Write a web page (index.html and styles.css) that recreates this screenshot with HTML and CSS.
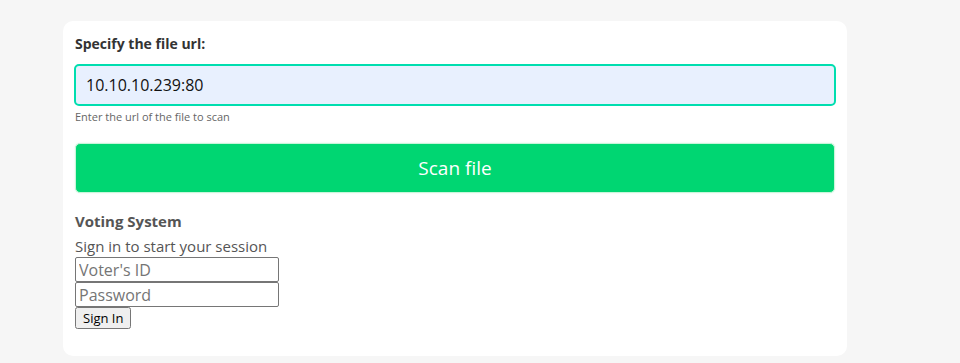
FILE: index.html
```html
<!DOCTYPE html>
<html>
<head>
  <title>Scan File</title>
  <link rel="stylesheet" href="styles.css">
</head>
<body>
  <div class="card">
    <form class="scan-form">
      <label class="field-label" for="file-url">Specify the file url:</label>
      <input class="url-input" type="text" id="file-url" value="10.10.10.239:80">
      <small class="help-text">Enter the url of the file to scan</small>
      <button class="scan-button" type="button">Scan file</button>
    </form>

    <div class="voting">
      <h3 class="voting-title">Voting System</h3>
      <p class="voting-text">Sign in to start your session</p>
      <form class="login-form">
        <input class="login-input" type="text" placeholder="Voter's ID">
        <input class="login-input" type="password" placeholder="Password">
        <button class="login-button" type="button">Sign In</button>
      </form>
    </div>
  </div>
</body>
</html>
```

FILE: styles.css
```css
/* Page background */
body {
  margin: 0;
  padding: 21px 0 0 63px;
  background-color: #f6f6f6;
  font-family: "Open Sans", sans-serif;
}

/* White card */
.card {
  width: 762px;
  background-color: #fff;
  border-radius: 10px;
  padding: 13px 11px 27px 11px;
}

.scan-form {
  display: flex;
  flex-direction: column;
}

.field-label {
  font-size: 14px;
  font-weight: bold;
  color: #333;
  line-height: 20px;
  margin: 0 0 10px 1px;
}

.url-input {
  height: 42px;
  box-sizing: border-box;
  border: 2px solid #00deaf;
  border-radius: 5px;
  background-color: #e8f0fe;
  padding: 0 10px;
  font-family: inherit;
  font-size: 16px;
  color: #111;
  outline: none;
}

.help-text {
  font-size: 11px;
  color: #666;
  line-height: 14px;
  margin: 4px 0 0 1px;
}

.scan-button {
  margin: 19px 1px 0 1px;
  height: 50px;
  border: 1px solid #c9f5db;
  border-radius: 5px;
  background-color: #00d672;
  box-shadow: 0 0 2px #d8f7e4;
  color: #fff;
  font-family: inherit;
  font-size: 19px;
  cursor: pointer;
}

.voting {
  margin: 18px 0 0 1px;
  color: #555;
}

.voting-title {
  margin: 0;
  font-size: 15px;
  line-height: 20px;
}

.voting-text {
  margin: 5px 0 0;
  font-size: 15px;
  line-height: 20px;
}

.login-form {
  display: flex;
  flex-direction: column;
  align-items: flex-start;
  padding-top: 1px;
}

.login-input {
  width: 204px;
  height: 25px;
  box-sizing: border-box;
  margin: 0;
  border: 1px solid #767676;
  border-radius: 2px;
  padding: 0 3px;
  font-family: inherit;
  font-size: 16px;
}

.login-button {
  height: 22px;
  margin: 0;
  font-family: inherit;
  font-size: 13px;
  padding: 0 6px;
}
```
